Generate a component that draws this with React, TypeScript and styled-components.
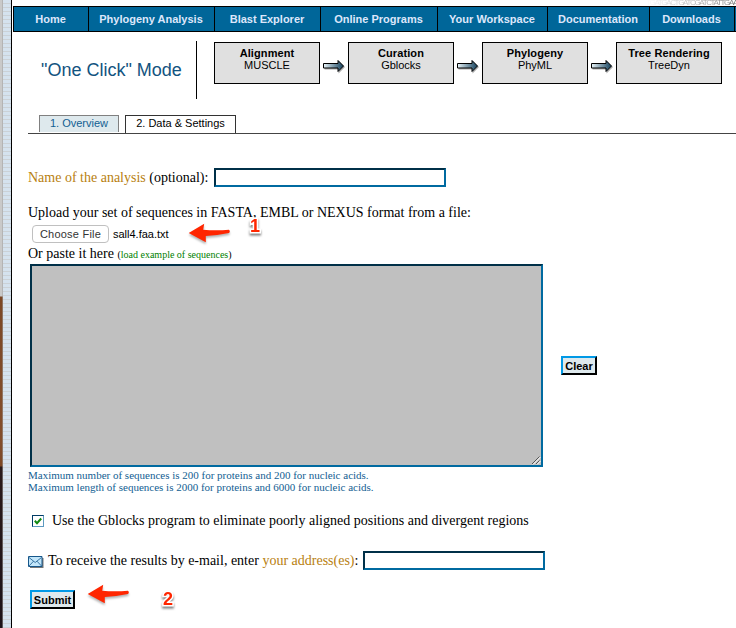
import React from 'react';
import styled, { createGlobalStyle } from 'styled-components';

const Global = createGlobalStyle`
  *, *::before, *::after { box-sizing: border-box; }
  html, body { margin: 0; padding: 0; background: #fff; }
  body { overflow: hidden; }
  button, input, textarea { margin: 0; padding: 0; border-radius: 0; outline: none; }
`;

const sans = '"Liberation Sans", Arial, Helvetica, sans-serif';
const serif = '"Liberation Serif", "Times New Roman", Times, serif';

const Screen = styled.div`
  display: grid;
  grid-template-columns: 3px 9px 724px;
  width: 736px;
  height: 628px;
  overflow: hidden;
  background: #fff;
  color: #000;
  font-family: ${serif};
`;

const Desktop = styled.div`
  background: linear-gradient(#c9c9c9 0 296px, #7c4826 297px, #834e2b 440px, #7c4826 466px, #2a1b1b 467px, #1c1218 628px);
  border-right: 1px solid rgba(160, 160, 160, 0.5);
`;

const Stripes = styled.div`
  border-right: 1px solid #000;
  background: repeating-linear-gradient(#d5e2ee 0 3px, #cbd1d6 3px 4px);
`;

const Page = styled.div`
  position: relative;
  display: flex;
  flex-direction: column;
  min-width: 0;
`;

const Banner = styled.div`
  height: 6px;
  padding-left: 634px;
  overflow: hidden;
  white-space: nowrap;
  font: 8px/6px ${sans};
  letter-spacing: -1.35px;
  background: linear-gradient(90deg, #fff 634px, #777 724px);
  background-clip: text;
  color: transparent;
`;

const Nav = styled.nav`
  display: flex;
  flex: none;
  height: 26px;
  margin-left: 1px;
  border: solid #000;
  border-width: 1px 0;
  background: #006699;
`;

const NavItem = styled.a<{ $w: number }>`
  flex: none;
  width: ${(p) => p.$w}px;
  padding-right: 1px;
  border-left: 1px solid #000;
  color: #dde6fb;
  font: bold 11px/25px ${sans};
  text-align: center;
  white-space: nowrap;
`;

const Header = styled.header`
  display: flex;
  flex: none;
  align-items: flex-start;
  height: 83px;
  padding-top: 9px;
`;

const Title = styled.h1`
  width: 185px;
  height: 58px;
  margin: 0 17px 0 0;
  padding-left: 29px;
  border-right: 1px solid #000;
  color: #125380;
  font: 18px/58px ${sans};
  white-space: nowrap;
`;

const Pipeline = styled.div`
  display: flex;
  align-items: center;
  margin-top: 1px;
`;

const Step = styled.div`
  width: 106px;
  height: 42px;
  padding-top: 4px;
  border: 1px solid #000;
  background: #e0e0e0;
  font: 11px/12px ${sans};
  text-align: center;
  white-space: nowrap;
`;

const StepName = styled.b`
  display: block;
  letter-spacing: 0.1px;
`;

const StepArrow = styled.svg`
  display: block;
  width: 28px;
  height: 18px;
  margin-top: 5px;
`;

const Tabs = styled.div`
  display: flex;
  flex: none;
  gap: 6px;
  height: 19px;
  margin-left: 16px;
  padding-left: 11px;
  border-bottom: 1px solid #444;
`;

const Tab = styled.a<{ $active?: boolean }>`
  width: ${(p) => (p.$active ? 111 : 80)}px;
  height: ${(p) => (p.$active ? 18 : 17)}px;
  border: 1px solid ${(p) => (p.$active ? '#333' : '#808080')};
  border-bottom: 0;
  background: ${(p) => (p.$active ? '#fff' : '#dee9ed')};
  color: ${(p) => (p.$active ? '#000' : '#126092')};
  font: 11px/15px ${sans};
  text-align: center;
  white-space: nowrap;
`;

const Form = styled.form`
  display: flex;
  flex-direction: column;
  padding: 34px 0 0 16px;
`;

const Line = styled.div<{ $h: number; $mt?: number }>`
  display: flex;
  align-items: center;
  flex: none;
  height: ${(p) => p.$h}px;
  margin-top: ${(p) => p.$mt ?? 0}px;
  font-size: 14px;
  line-height: ${(p) => p.$h}px;
  white-space: pre;
`;

const Help = styled.span`
  color: #b8800f;
`;

const FieldLabel = styled.label<{ $w: number }>`
  flex: none;
  width: ${(p) => p.$w}px;
`;

const TextField = styled.input<{ $w: number }>`
  width: ${(p) => p.$w}px;
  height: 19px;
  border: 2px solid;
  border-color: #003048 #006aa0 #006aa0 #003048;
  background: #fff;
`;

const ChooseFile = styled.button`
  width: 77px;
  height: 18px;
  margin: 0 4px;
  border: 1px solid #c0c0c0;
  border-radius: 4px;
  background: #fff;
  color: #333;
  font: 11px/15px ${sans};
  letter-spacing: 0.22px;
`;

const FileName = styled.span`
  font: 11px/16px ${sans};
`;

const Hint = styled.small`
  padding-top: 2px;
  font-size: 10px;
`;

const Example = styled.a`
  color: #008000;
`;

const PasteRow = styled.div`
  display: flex;
  align-items: center;
  gap: 18px;
  margin-top: 1px;
  padding-left: 2px;
`;

const Sequences = styled.div`
  display: flex;
  align-items: flex-end;
  justify-content: flex-end;
  width: 513px;
  height: 203px;
  border: 2px solid;
  border-color: #003048 #006aa0 #006aa0 #003048;
  background: #c0c0c0;
`;

const Notes = styled.p`
  margin: 2px 0 0;
  color: #126092;
  font-size: 11px;
  line-height: 12px;
  white-space: nowrap;
`;

const PushButton = styled.button<{ $w: number }>`
  width: ${(p) => p.$w}px;
  height: 19px;
  padding-top: 1px;
  border: 2px solid;
  border-color: #0099e6 #000 #000 #0099e6;
  background: #dee9ed;
  color: #000;
  font: bold 11px/14px ${sans};
`;

const Actions = styled(Line)`
  padding-left: 2px;
`;

const Check = styled.span`
  display: flex;
  align-items: center;
  justify-content: center;
  width: 12px;
  height: 12px;
  margin: 0 8px 0 4px;
  border: 1px solid;
  border-color: #003c66 #5d9ac0 #5d9ac0 #003c66;
  background: #fff;
`;

const Mail = styled.svg`
  flex: none;
  width: 16px;
  height: 12px;
  margin: 3px 4px 0 0;
`;

const Pointer = styled.svg<{ $x: number; $y: number }>`
  position: absolute;
  left: ${(p) => p.$x}px;
  top: ${(p) => p.$y}px;
  width: 46px;
  height: 24px;
  filter: drop-shadow(0 2px 1px rgba(0, 0, 0, 0.3));
`;

const Marker = styled.span<{ $x: number; $y: number }>`
  position: absolute;
  left: ${(p) => p.$x}px;
  top: ${(p) => p.$y}px;
  color: #ff2600;
  font: bold 18px/20px ${sans};
  -webkit-text-stroke: 3px #fff;
  paint-order: stroke fill;
  filter: drop-shadow(0 2px 1px rgba(0, 0, 0, 0.5));
`;

const links: [string, number][] = [
  ['Home', 75],
  ['Phylogeny Analysis', 126],
  ['Blast Explorer', 106],
  ['Online Programs', 117],
  ['Your Workspace', 110],
  ['Documentation', 102],
  ['Downloads', 85],
  ['', 2],
];

const steps = [
  ['Alignment', 'MUSCLE'],
  ['Curation', 'Gblocks'],
  ['Phylogeny', 'PhyML'],
  ['Tree Rendering', 'TreeDyn'],
];

function NextArrow() {
  return (
    <StepArrow viewBox="0 0 28 18">
      <defs>
        <linearGradient id="flow">
          <stop offset="0" stopColor="#e8f4f8" />
          <stop offset="1" stopColor="#123f5b" />
        </linearGradient>
      </defs>
      <path d="M4.5 7.5h14v-4l6.5 6.5-6.5 6.5v-4h-14z" fill="#aaa" />
      <path d="M3.5 6.5h14.5v-3l5.500 5.500-5.500 5.500v-3.500h-14.500z" fill="url(#flow)" stroke="#000" />
    </StepArrow>
  );
}

function RedPointer({ x, y }: { x: number; y: number }) {
  return (
    <Pointer $x={x} $y={y} viewBox="0 0 46 24">
      <path d="M1.7 10 L17.2 .8 L16.2 6.8 Q29 7.8 42 6.8 Q43.6 8.5 42 10 Q30 12.3 18.8 13 L18.8 19.2 Z" fill="#ff2600" />
    </Pointer>
  );
}

export default function App() {
  return (
    <>
      <Global />
      <Screen>
        <Desktop />
        <Stripes />
        <Page>
          <Banner>TGATGACTGATCGATCTATTGAA</Banner>
          <Nav>
            {links.map(([label, w]) => (
              <NavItem key={w} $w={w}>{label}</NavItem>
            ))}
          </Nav>
          <Header>
            <Title>"One Click" Mode</Title>
            <Pipeline>
              {steps.map(([name, tool], i) => (
                <React.Fragment key={name}>
                  {i > 0 && <NextArrow />}
                  <Step>
                    <StepName>{name}</StepName>
                    {tool}
                  </Step>
                </React.Fragment>
              ))}
            </Pipeline>
          </Header>
          <Tabs>
            <Tab>1. Overview</Tab>
            <Tab $active>2. Data &amp; Settings</Tab>
          </Tabs>
          <Form>
            <Line $h={19}>
              <FieldLabel $w={186}><Help>Name of the analysis</Help> (optional):</FieldLabel>
              <TextField $w={232} />
            </Line>
            <Line $h={18} $mt={17}>Upload your set of sequences in FASTA, EMBL or NEXUS format from a file:</Line>
            <Line $h={18} $mt={3}>
              <ChooseFile type="button">Choose File</ChooseFile>
              <FileName>sall4.faa.txt</FileName>
            </Line>
            <Line $h={18} $mt={2}>
              {'Or paste it here '}
              <Hint>(<Example>load example of sequences</Example>)</Hint>
            </Line>
            <PasteRow>
              <Sequences>
                <svg width="10" height="10" viewBox="0 0 10 10">
                  <path d="M2 9.5 9.5 2M6 9.5 9.5 6" stroke="#fff" fill="none" />
                  <path d="M1 9 8.5 1.5M5 9 8.5 5.5" stroke="#555" fill="none" />
                </svg>
              </Sequences>
              <PushButton type="button" $w={36}>Clear</PushButton>
            </PasteRow>
            <Notes>
              Maximum number of sequences is 200 for proteins and 200 for nucleic acids.
              <br />
              Maximum length of sequences is 2000 for proteins and 6000 for nucleic acids.
            </Notes>
            <Line $h={18} $mt={19}>
              <Check>
                <svg width="10" height="10" viewBox="0 0 10 10">
                  <path d="M1.8 4.8 4 7.2 8.2 2.5" stroke="#128a12" strokeWidth="2" fill="none" />
                </svg>
              </Check>
              Use the Gblocks program to eliminate poorly aligned positions and divergent regions
            </Line>
            <Line $h={19} $mt={21}>
              <Mail viewBox="0 0 16 12">
                <path d="M2 2h13.5v10H2z" fill="#777" />
                <path d="M.5 .5h13.5v10H.5z" fill="#c2e6fa" stroke="#17578a" />
                <path d="M1 1.5 7.2 6.5 13.5 1.5M1 10 5.5 5.2M13.5 10 9 5.2" fill="none" stroke="#17578a" strokeWidth=".8" />
              </Mail>
              <FieldLabel $w={315}>To receive the results by e-mail, enter <Help>your address(es)</Help>:</FieldLabel>
              <TextField $w={182} />
            </Line>
            <Actions $h={19} $mt={20}>
              <PushButton type="button" $w={45}>Submit</PushButton>
            </Actions>
          </Form>
          <RedPointer x={175} y={223} />
          <Marker $x={238} $y={216}>1</Marker>
          <RedPointer x={74} y={584} />
          <Marker $x={151} $y={589}>2</Marker>
        </Page>
      </Screen>
    </>
  );
}
